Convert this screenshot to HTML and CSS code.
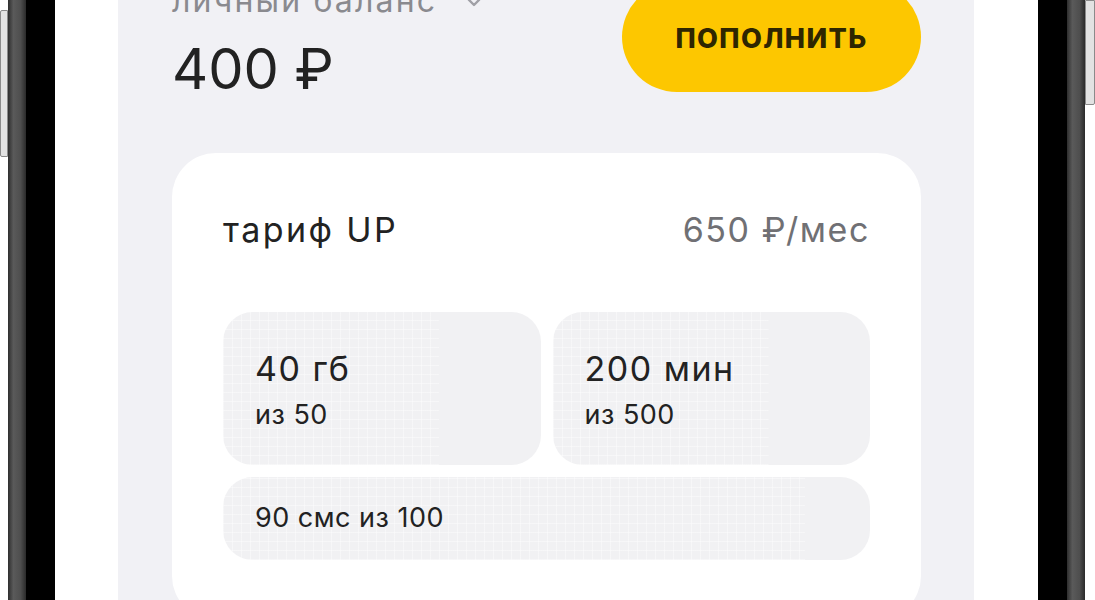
FILE: index.html
```html
<!DOCTYPE html>
<html lang="ru">
<head>
  <meta charset="UTF-8" />
  <meta name="viewport" content="width=device-width, initial-scale=1.0"/>
  <title>Баланс</title>
  <link rel="stylesheet" href="styles.css">
</head>
<body>
  <div class="device">
    <div class="edge"><span class="key key-left"></span></div>
    <div class="rim"></div>
    <div class="glass"></div>

    <main class="screen">
      <section class="balance-card">
        <div class="balance-row">
          <div class="balance-info">
            <div class="balance-label">
              личный баланс
              <svg class="chevron" width="14" height="10" viewBox="0 0 14 10">
                <path d="M2 2 L7 7 L12 2" fill="none" stroke="#a0a0a6" stroke-width="2.4" stroke-linecap="round" stroke-linejoin="round"/>
              </svg>
            </div>
            <div class="balance-amount">400 ₽</div>
          </div>
          <button class="topup">ПОПОЛНИТЬ</button>
        </div>

        <div class="tariff-card">
          <div class="tariff-head">
            <span class="tariff-name">тариф UP</span>
            <span class="tariff-price">650 ₽/мес</span>
          </div>

          <div class="tiles">
            <div class="tile">
              <div class="tile-value">40 гб</div>
              <div class="tile-total">из 50</div>
            </div>
            <div class="tile">
              <div class="tile-value">200 мин</div>
              <div class="tile-total">из 500</div>
            </div>
            <div class="tile tile-wide">
              <div class="tile-total">90 смс из 100</div>
            </div>
          </div>
        </div>
      </section>
    </main>

    <div class="glass"></div>
    <div class="rim"></div>
    <div class="edge edge-right"><span class="key key-right"></span></div>
  </div>
</body>
</html>
```

FILE: styles.css
```css
* {
  box-sizing: border-box;
}

body {
  margin: 0;
  background: #ffffff;
  font-family: 'Inter', 'Noto Sans', sans-serif;
  color: #222222;
  overflow: hidden;
}

.device {
  display: flex;
  height: 600px;
}

/* phone frame */
.edge {
  width: 8px;
  background: #ffffff;
}

.edge-right {
  width: 10px;
}

.key {
  display: block;
  background: #e2e2e2;
  border: 1px solid #8a8a8a;
}

.key-left {
  margin-top: 10px;
  height: 147px;
  border-radius: 2px 0 0 2px;
}

.key-right {
  height: 105px;
  border-radius: 0 0 2px 0;
}

.rim {
  width: 18px;
  background: linear-gradient(90deg, #2e2e2e 0%, #5a5a5a 30%, #4e4e4e 70%, #2a2a2a 100%);
}

.glass {
  width: 29px;
  background: #000000;
}

.screen {
  flex: 1;
  background: #ffffff;
  padding: 0 64px 0 63px;
  overflow: hidden;
}

/* balance block */
.balance-card {
  margin-top: -60px;
  background: #f1f1f5;
  border-radius: 48px 48px 0 0;
  padding: 41px 53px 0 54px;
  height: 720px;
}

.balance-row {
  display: flex;
  justify-content: space-between;
  align-items: flex-start;
}

.balance-label {
  margin-top: 2px;
  font-size: 32px;
  line-height: 36px;
  letter-spacing: 2.2px;
  color: #8a8a8f;
  display: flex;
  align-items: center;
  gap: 30px;
}

.chevron {
  margin-top: 4px;
}

.balance-amount {
  margin-top: 18px;
  font-size: 56px;
  line-height: 64px;
  color: #222222;
}

.topup {
  margin-top: 1px;
  width: 299px;
  height: 110px;
  border: none;
  border-radius: 55px;
  background: #fdc700;
  color: #2e2600;
  font-family: inherit;
  font-size: 27px;
  font-weight: 800;
  letter-spacing: 1.4px;
  padding: 0;
  padding-top: 2px;
}

/* tariff */
.tariff-card {
  margin-top: 52px;
  background: #ffffff;
  border-radius: 44px;
  padding: 57px 51px 60px 51px;
}

.tariff-head {
  display: flex;
  justify-content: space-between;
  font-size: 34px;
  line-height: 40px;
  letter-spacing: 2.4px;
}

.tariff-price {
  color: #707074;
  letter-spacing: 1.6px;
}

.tiles {
  margin-top: 62px;
  display: grid;
  grid-template-columns: 1fr 1fr;
  gap: 12px;
}

.tile {
  background-color: #f1f1f3;
  background-image:
    repeating-linear-gradient(90deg, rgba(255,255,255,0.4) 0 1px, transparent 1px 9px),
    repeating-linear-gradient(0deg, rgba(255,255,255,0.4) 0 1px, transparent 1px 9px);
  background-size: 68% 100%;
  background-repeat: no-repeat;
  border-radius: 30px;
  padding: 38px 32px 34px;
}

.tile-wide {
  grid-column: 1 / 3;
  padding: 25px 32px 26px;
  background-size: 90% 100%;
}

.tile-value {
  font-size: 34px;
  line-height: 38px;
  letter-spacing: 1.5px;
}

.tile-total {
  margin-top: 11px;
  font-size: 27px;
  line-height: 32px;
  letter-spacing: 0.5px;
}

.tile-wide .tile-total {
  margin-top: 0;
}
```
